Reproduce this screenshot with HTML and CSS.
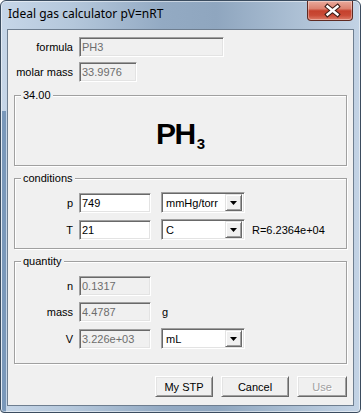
FILE: index.html
```html
<!DOCTYPE html>
<html lang="en">
<head>
  <meta charset="UTF-8">
  <title>Ideal gas calculator pV=nRT</title>
  <link rel="stylesheet" href="styles.css">
</head>
<body>
  <div class="window">
    <!-- Title bar -->
    <div class="titlebar">
      <span class="title">Ideal gas calculator pV=nRT</span>
      <button class="close" title="Close">
        <svg width="46" height="19" viewBox="0 0 46 19">
          <path d="M19.5 5.5 L29.5 13.5 M29.5 5.5 L19.5 13.5" stroke="#3b1c17" stroke-width="4.6" stroke-linecap="square"/>
          <path d="M19.5 5.5 L29.5 13.5 M29.5 5.5 L19.5 13.5" stroke="#fff" stroke-width="2.4" stroke-linecap="square"/>
        </svg>
      </button>
    </div>

    <div class="client">
      <div class="row">
        <span class="label">formula</span>
        <input class="field formula-field" value="PH3" disabled>
      </div>
      <div class="row">
        <span class="label">molar mass</span>
        <input class="field mass-field" value="33.9976" disabled>
      </div>

      <!-- Formula preview -->
      <div class="group">
        <span class="group-title">34.00</span>
        <div class="formula-view"><span class="formula">PH<sub>3</sub></span></div>
      </div>

      <!-- Conditions -->
      <div class="group">
        <span class="group-title">conditions</span>
        <div class="group-body conditions">
          <div class="row tall">
            <span class="label">p</span>
            <input class="field short" value="749">
            <div class="combo"><span>mmHg/torr</span><span class="drop"><svg width="7" height="4" viewBox="0 0 7 4"><polygon points="0,0 7,0 3.5,4" fill="#000"/></svg></span></div>
          </div>
          <div class="row tall">
            <span class="label">T</span>
            <input class="field short" value="21">
            <div class="combo"><span>C</span><span class="drop"><svg width="7" height="4" viewBox="0 0 7 4"><polygon points="0,0 7,0 3.5,4" fill="#000"/></svg></span></div>
            <span class="note">R=6.2364e+04</span>
          </div>
        </div>
      </div>

      <!-- Quantity -->
      <div class="group">
        <span class="group-title">quantity</span>
        <div class="group-body quantity">
          <div class="row">
            <span class="label">n</span>
            <input class="field short" value="0.1317" disabled>
          </div>
          <div class="row">
            <span class="label">mass</span>
            <input class="field short" value="4.4787" disabled>
            <span class="unit">g</span>
          </div>
          <div class="row tall">
            <span class="label">V</span>
            <input class="field short" value="3.226e+03" disabled>
            <div class="combo"><span>mL</span><span class="drop"><svg width="7" height="4" viewBox="0 0 7 4"><polygon points="0,0 7,0 3.5,4" fill="#000"/></svg></span></div>
          </div>
        </div>
      </div>

      <div class="buttons">
        <button class="btn stp">My STP</button>
        <button class="btn cancel">Cancel</button>
        <button class="btn use" disabled>Use</button>
      </div>
    </div>
  </div>
</body>
</html>
```

FILE: styles.css
```css
/* General styles */
* {
  box-sizing: border-box;
}

body {
  margin: 0;
  font-family: "Liberation Sans", Arial, sans-serif;
  font-size: 11px;
  color: #000;
}

/* Window frame */
.window {
  width: 361px;
  height: 413px;
  border: 1px solid #3b4c5f;
  border-radius: 6px 6px 4px 4px;
  padding: 0 6px 6px;
  display: flex;
  flex-direction: column;
  background:
    linear-gradient(to right, transparent 1px, #7a98ba 1px, #7a98ba 5px, transparent 5px) 0 110px / 100% 100% no-repeat,
    linear-gradient(to right, #c6d6e8 0%, #b4c7db 20%, #93aac3 45%, #8fa6bf 60%, #a9bdd2 80%, #c3d3e5 100%);
  box-shadow: inset 0 0 0 1px rgba(255, 255, 255, 0.5);
}

.titlebar {
  height: 28px;
  margin: 0 -6px;
  padding: 0 7px;
  display: flex;
  align-items: flex-start;
}

.title {
  margin-top: 5px;
  font-family: "Noto Sans", sans-serif;
  font-size: 12px;
  line-height: 16px;
}

.close {
  margin-left: auto;
  width: 46px;
  height: 20px;
  padding: 0;
  border: 1px solid #5e2a22;
  border-top: none;
  border-radius: 0 0 4px 4px;
  background: linear-gradient(#e9aa9c 0%, #dc8270 40%, #c5412d 52%, #c94a36 75%, #de7c68 100%);
  box-shadow: inset 0 0 0 1px rgba(255, 255, 255, 0.35);
}

.close svg {
  display: block;
}

/* Client area */
.client {
  flex: 1;
  border: 1px solid #6e7e90;
  background: #f0f0f0;
  padding: 7px 6px 0;
  display: flex;
  flex-direction: column;
}

.row {
  display: flex;
  align-items: center;
  height: 20px;
}

.row + .row {
  margin-top: 5px;
}

.row.tall {
  height: 21px;
}

.label {
  width: 59px;
  margin-right: 6px;
  text-align: right;
}

.group .label {
  width: 58px;
}

/* Edit boxes */
.field {
  height: 20px;
  margin: 0;
  padding: 0 2px;
  border: 1px solid;
  border-color: #a0a0a0 #fff #fff #a0a0a0;
  box-shadow: inset 1px 1px 0 #696969, inset -1px -1px 0 #e3e3e3;
  background: #fff;
  font: inherit;
  color: #000;
  outline: none;
}

.field:disabled {
  background: #f0f0f0;
  color: #6d6d6d;
}

.formula-field {
  width: 145px;
}

.mass-field {
  width: 58px;
}

.short {
  width: 72px;
}

/* Combo boxes */
.combo {
  width: 84px;
  height: 21px;
  margin-left: 10px;
  padding: 2px 2px 2px 4px;
  border: 1px solid;
  border-color: #a0a0a0 #fff #fff #a0a0a0;
  box-shadow: inset 1px 1px 0 #696969, inset -1px -1px 0 #e3e3e3;
  background: #fff;
  display: flex;
  align-items: center;
}

.drop {
  margin-left: auto;
  width: 17px;
  height: 17px;
  border: 1px solid;
  border-color: #e3e3e3 #696969 #696969 #e3e3e3;
  box-shadow: inset 1px 1px 0 #fff, inset -1px -1px 0 #a0a0a0;
  background: #f0f0f0;
  display: flex;
  align-items: center;
  justify-content: center;
}

.drop svg {
  display: block;
}

.note {
  margin-left: 7px;
}

.unit {
  margin-left: 11px;
}

/* Group boxes */
.group {
  margin-top: 13px;
  border: 1px solid #a0a0a0;
  box-shadow: 1px 1px 0 #fff, inset 1px 1px 0 #fff;
  display: flex;
  flex-direction: column;
}

.group + .group {
  margin-top: 12px;
}

.group-title {
  align-self: flex-start;
  margin: -7px 0 0 6px;
  padding: 0 2px;
  line-height: 13px;
  background: #f0f0f0;
}

.formula-view {
  height: 63px;
  display: flex;
  align-items: center;
  justify-content: center;
}

.formula {
  font-size: 30px;
  font-weight: bold;
  line-height: 30px;
  letter-spacing: -1.5px;
}

.formula sub {
  font-size: 15px;
  line-height: 0;
  vertical-align: -5px;
  margin-left: 2px;
  letter-spacing: 0;
}

.conditions {
  padding: 7px 0 8px;
}

.conditions .row + .row {
  margin-top: 6px;
}

.quantity {
  padding: 8px 0 14px;
}

.quantity .row + .row {
  margin-top: 6px;
}

/* Buttons */
.buttons {
  margin-top: 12px;
  display: flex;
  justify-content: flex-end;
  gap: 8px;
}

.btn {
  height: 21px;
  padding: 0;
  border: 1px solid;
  border-color: #fff #696969 #696969 #fff;
  box-shadow: inset 1px 1px 0 #e3e3e3, inset -1px -1px 0 #a0a0a0;
  background: #f0f0f0;
  font: inherit;
  color: #000;
}

.stp {
  width: 58px;
}

.cancel {
  width: 68px;
}

.use {
  width: 50px;
}

.btn:disabled {
  color: #a0a0a0;
  text-shadow: 1px 1px 0 #fff;
}
```
